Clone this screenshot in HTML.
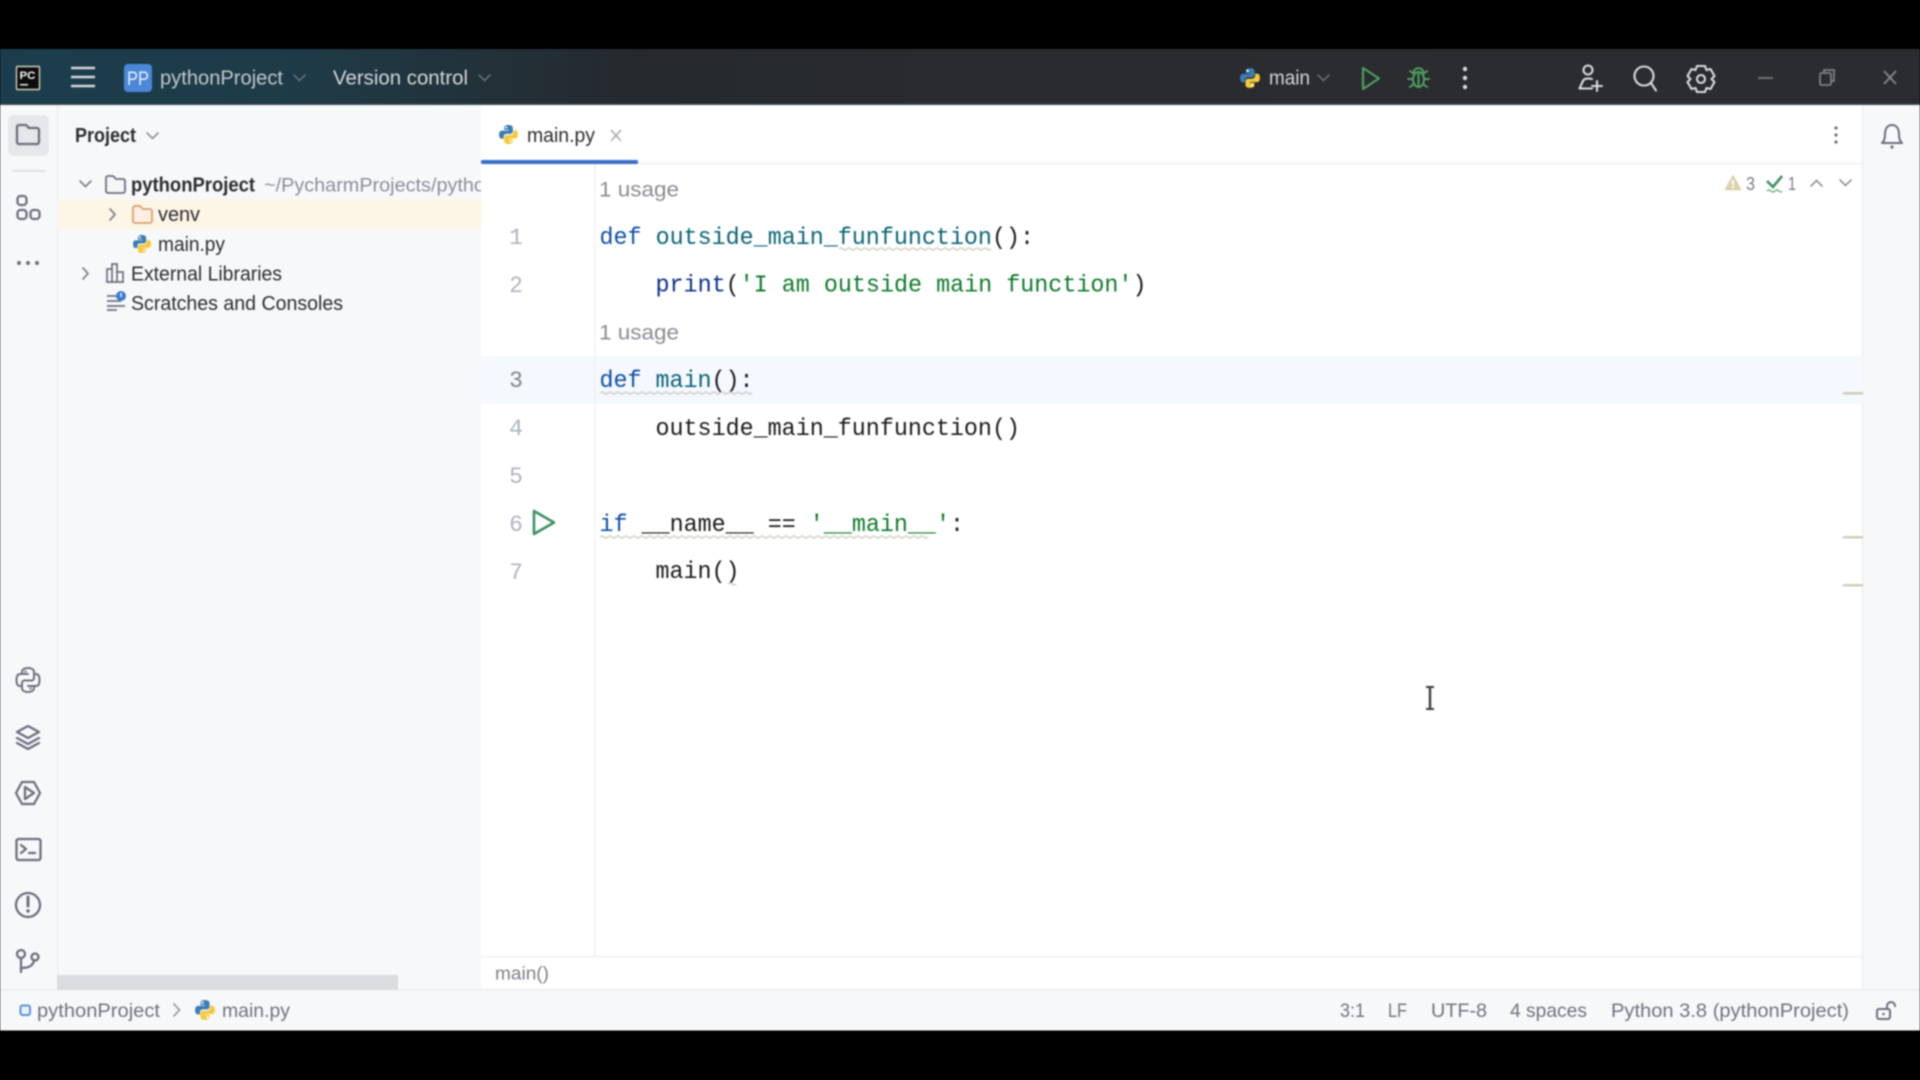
<!DOCTYPE html>
<html lang="en"><head><meta charset="utf-8"><title>pythonProject - main.py</title>
<style>
html,body{margin:0;padding:0;background:#000;width:1920px;height:1080px;overflow:hidden}
svg{display:block;filter:blur(.7px)}
text{font-family:"Liberation Sans",sans-serif;white-space:pre}
.m{font-family:"Liberation Mono",monospace;font-size:24px}
.h{font-size:20px;fill:#d4d7db}
.t{font-size:20px;fill:#2b2d30}
.b{font-size:20px;fill:#2b2d30;font-weight:bold}
.s{font-size:19.5px;fill:#70737c}
.g{fill:none;stroke:#6c707e;stroke-width:2.3;stroke-linecap:round;stroke-linejoin:round}
.w{fill:none;stroke:#d8dadf;stroke-width:2.1;stroke-linecap:round;stroke-linejoin:round}
.ln{font-family:"Liberation Mono",monospace;font-size:23px;fill:#aeb3c0;text-anchor:middle}
.wv{fill:none;stroke:#c9cfc4;stroke-width:1.5}
</style></head><body>
<svg width="1920" height="1080" viewBox="0 0 1920 1080" xmlns="http://www.w3.org/2000/svg">
<defs>
<linearGradient id="hd" x1="0" x2="1" y1="0" y2="0">
<stop offset="0" stop-color="#1b3d4c"/><stop offset=".16" stop-color="#1e3a47"/><stop offset=".33" stop-color="#25292d"/><stop offset=".55" stop-color="#2a2b2e"/><stop offset="1" stop-color="#2b2c2f"/>
</linearGradient>
<symbol id="py" viewBox="0 0 16 16">
<path fill="#3c7cb8" d="M8 .8C5.400 .8 4.800 1.800 4.800 3V4.500H8.200V5H3C1.600 5 .8 6.200 .8 8.200S1.600 11.200 3 11.200H4.300V9.600C4.300 8.400 5.300 7.500 6.500 7.500H9.500C10.500 7.500 11.300 6.700 11.300 5.700V3C11.300 1.700 10.300 .8 8 .8Z"/>
<path fill="#f6c93b" d="M8 15.200C10.600 15.200 11.200 14.200 11.200 13V11.500H7.800V11H13C14.400 11 15.200 9.800 15.200 7.800S14.400 4.800 13 4.800H11.700V6.400C11.700 7.600 10.700 8.500 9.500 8.500H6.500C5.500 8.500 4.700 9.300 4.700 10.300V13C4.700 14.300 5.700 15.200 8 15.200Z"/>
<circle cx="6.300" cy="2.700" r=".8" fill="#fff"/><circle cx="9.700" cy="13.300" r=".8" fill="#fff"/>
</symbol>
</defs>

<rect width="1920" height="1080" fill="#000"/>
<!-- Header -->
<rect x="0" y="49" width="1920" height="56" fill="url(#hd)"/>
<rect x="0" y="103.500" width="1920" height="1.500" fill="#3d4a50"/>
<rect x="16.500" y="66.500" width="23" height="23" rx="1" fill="#0c0c0c" stroke="#d8d4b8" stroke-width="1.400"/>
<text x="19.500" y="79" font-size="11" font-weight="bold" fill="#f4f4f4" textLength="16" lengthAdjust="spacingAndGlyphs">PC</text>
<rect x="20" y="84" width="8" height="1.500" fill="#eee"/>
<g stroke="#d4d6da" stroke-width="2.600"><path d="M71 68H95M71 77H95M71 86H95"/></g>
<rect x="124" y="64" width="28" height="28" rx="4" fill="#4c88d8"/>
<text x="127" y="85" font-size="19" fill="#e8f0fb" textLength="22" lengthAdjust="spacingAndGlyphs">PP</text>
<text class="h" x="160" y="84.500" style="fill:#c4c9cd" textLength="123" lengthAdjust="spacingAndGlyphs">pythonProject</text>
<path fill="none" stroke="#6d7a80" stroke-width="1.400" stroke-linecap="round" d="M294 75l5.500 5.500 5.500-5.500M479 75l5.500 5.500 5.500-5.500"/>
<text class="h" x="333" y="84.500" textLength="135" lengthAdjust="spacingAndGlyphs">Version control</text>
<use href="#py" x="1239" y="67" width="22" height="22"/>
<text class="h" x="1269" y="84.500" textLength="41" lengthAdjust="spacingAndGlyphs">main</text>
<path fill="none" stroke="#75787b" stroke-width="1.400" stroke-linecap="round" d="M1318 75l5.500 5.500 5.500-5.500"/>
<path fill="none" stroke="#4e9f5f" stroke-width="2.200" stroke-linejoin="round" d="M1363 68V89L1379 78.500Z"/>
<g fill="none" stroke="#4e9f5f" stroke-width="2" stroke-linecap="round">
<ellipse cx="1418.500" cy="79.500" rx="5.500" ry="7.500"/><path d="M1414 72c0-5 9-5 9 0"/>
<path d="M1410 71l4 3M1427 71l-4 3M1408 79h5M1429 79h-5M1410 87l4-3M1427 87l-4-3M1418.500 74v12"/>
</g>
<g fill="#d8dadf"><circle cx="1465" cy="69" r="2.200"/><circle cx="1465" cy="78" r="2.200"/><circle cx="1465" cy="87" r="2.200"/></g>
<g class="w"><circle cx="1588" cy="70" r="4.500"/><path d="M1592 79c-4-1-8-.5-9 2l-3.500 7.500H1592M1597 81V91M1592 86H1602"/></g>
<g class="w"><circle cx="1644" cy="76" r="9.500"/><path d="M1651 83l5 7.500"/></g>
<g class="w"><path d="M1697 66h8l1.500 4 4-1 4 7-3 3 3 3-4 7-4-1-1.500 4h-8l-1.500-4-4 1-4-7 3-3-3-3 4-7 4 1z"/><circle cx="1701" cy="79" r="4"/></g>
<path stroke="#6f7174" stroke-width="2" d="M1758 78H1773"/>
<g fill="none" stroke="#7d7f82" stroke-width="1.800"><rect x="1820" y="73" width="11" height="12" rx="1.500"/><path d="M1824 73v-3h10v11h-3"/></g>
<path stroke="#85878a" stroke-width="1.800" fill="none" d="M1884 71L1896 84M1896 71L1884 84"/>

<!-- Panels -->
<rect x="0" y="105" width="481" height="885" fill="#f7f8fa"/>
<rect x="57" y="105" width="1.500" height="885" fill="#eff0f3"/>
<rect x="481" y="105" width="1382" height="885" fill="#fff"/>
<rect x="1863" y="105" width="57" height="885" fill="#f7f8fa"/>
<rect x="1862" y="105" width="1.500" height="885" fill="#eceef1"/>
<rect x="0" y="990" width="1920" height="40.500" fill="#f7f8fa"/>
<rect x="0" y="989" width="1920" height="1.500" fill="#ebecf0"/>

<!-- Left stripe -->
<rect x="8" y="115" width="41" height="41" rx="6" fill="#e6e7ea"/>
<path class="g" d="M17 127a2 2 0 0 1 2-2h7l3 3h8a2 2 0 0 1 2 2v12a2 2 0 0 1-2 2H19a2 2 0 0 1-2-2z"/>
<rect x="12" y="170" width="33" height="1.800" fill="#dcdee2"/>
<g class="g"><rect x="17.500" y="196" width="9" height="9" rx="3"/><rect x="17.500" y="210" width="9" height="9" rx="3"/><rect x="30.500" y="210" width="9" height="9" rx="3"/></g>
<g fill="#6c707e"><circle cx="19" cy="263" r="2"/><circle cx="28" cy="263" r="2"/><circle cx="37" cy="263" r="2"/></g>
<g class="g" style="stroke-width:2">
<path d="M22 674v-2c0-2.500 2.500-4 6-4s6 1.500 6 4v6c0 1.500-1 2.500-2.500 2.500h-7C23 680.500 22 681.500 22 683v3h-2c-2.500 0-3.500-2.500-3.500-6s1-6 3.500-6h8"/>
<path d="M34 686v2c0 2.500-2.500 4-6 4s-6-1.500-6-4v-5M34 686h2c2.500 0 3.500-2.500 3.500-6s-1-6-3.500-6h-2M34 686h-6"/>
</g>
<circle cx="25.500" cy="671.500" r="1.100" fill="#6c707e"/><circle cx="30.500" cy="688.500" r="1.100" fill="#6c707e"/>
<g class="g"><path d="M28 726l11 6-11 6-11-6z"/><path d="M17 738l11 6 11-6M17 743l11 6 11-6"/></g>
<g class="g"><path d="M22 782h12l6 11-6 11H22l-6-11z"/><path d="M25 787l9 6-9 6z"/></g>
<g class="g"><rect x="16.500" y="839" width="24" height="21" rx="2"/><path d="M21 845l5 4-5 4M29 853h6"/></g>
<g class="g"><circle cx="28" cy="905" r="12"/></g>
<path d="M28 897v9" stroke="#6c707e" stroke-width="3" stroke-linecap="round"/><circle cx="28" cy="911" r="1.800" fill="#6c707e"/>
<g class="g"><circle cx="21" cy="954" r="4"/><circle cx="35" cy="957" r="3.500"/><path d="M21 958v14M21 968c9 0 12-3 13-7.500"/></g>

<!-- Project panel -->
<text class="b" x="75" y="142" textLength="61" lengthAdjust="spacingAndGlyphs">Project</text>
<path fill="none" stroke="#8d919c" stroke-width="1.600" stroke-linecap="round" d="M147 133l5.500 5.500 5.500-5.500"/>
<rect x="58" y="199" width="423" height="31" fill="#fdf5e6"/>
<path fill="none" stroke="#7d818c" stroke-width="1.700" stroke-linecap="round" d="M80 181l5.500 5.500 5.500-5.500"/>
<path fill="none" stroke="#7d818c" stroke-width="1.700" stroke-linecap="round" stroke-linejoin="round" d="M110 209l5 5.500-5 5.500"/>
<path fill="none" stroke="#7d818c" stroke-width="1.700" stroke-linecap="round" stroke-linejoin="round" d="M83 268l5 5.500-5 5.500"/>
<path fill="#f4f5f7" stroke="#6c707e" stroke-width="1.800" d="M106 178a2 2 0 0 1 2-2h5l3 3h7a2 2 0 0 1 2 2v10a2 2 0 0 1-2 2h-15a2 2 0 0 1-2-2z"/>
<text class="b" x="131" y="191.500" textLength="124" lengthAdjust="spacingAndGlyphs">pythonProject</text>
<clipPath id="cp"><rect x="260" y="170" width="221" height="30"/></clipPath>
<text x="264" y="191.500" font-size="19.500" fill="#8c8f98" clip-path="url(#cp)" textLength="232" lengthAdjust="spacingAndGlyphs">~/PycharmProjects/python</text>
<path fill="#fdf0e2" stroke="#d9a173" stroke-width="1.800" d="M133 208a2 2 0 0 1 2-2h5l3 3h7a2 2 0 0 1 2 2v10a2 2 0 0 1-2 2h-15a2 2 0 0 1-2-2z"/>
<text class="t" x="158" y="221" textLength="42" lengthAdjust="spacingAndGlyphs">venv</text>
<use href="#py" x="132" y="233" width="20" height="22"/>
<text class="t" x="158" y="251" textLength="67" lengthAdjust="spacingAndGlyphs">main.py</text>
<g fill="none" stroke="#6c707e" stroke-width="1.700"><path d="M107 282v-13h5v13zM112 282v-18h5v18zM117 282v-10h6v10zM106 282h18"/></g>
<text class="t" x="131" y="280.500" textLength="151" lengthAdjust="spacingAndGlyphs">External Libraries</text>
<g stroke="#6c707e" stroke-width="1.700"><path d="M107 296h11M107 301h14M107 306h18M107 310h10"/></g>
<circle cx="121" cy="296" r="5" fill="#3a7bd5"/><path d="M121 293v4" stroke="#fff" stroke-width="1.400"/>
<text class="t" x="131" y="310" textLength="212" lengthAdjust="spacingAndGlyphs">Scratches and Consoles</text>
<rect x="57" y="975" width="341" height="15" fill="#dbdcdf"/>

<!-- Tab bar -->
<rect x="481" y="163" width="1382" height="1.500" fill="#eef0f2"/>
<rect x="481" y="160" width="157" height="4" rx="1.500" fill="#3a70c9"/>
<use href="#py" x="498" y="124" width="21" height="21"/>
<text class="t" x="527" y="142" textLength="68" lengthAdjust="spacingAndGlyphs">main.py</text>
<path stroke="#a5a8af" stroke-width="1.500" d="M611 130L621 141M621 130L611 141"/>
<g fill="#6c707e"><circle cx="1836" cy="128" r="1.600"/><circle cx="1836" cy="135" r="1.600"/><circle cx="1836" cy="142" r="1.600"/></g>
<g class="g" style="stroke-width:2"><path d="M1882 143c2-2 3-4 3-9 0-6 3-9 7-9s7 3 7 9c0 5 1 7 3 9z"/></g><circle cx="1892" cy="147" r="1.600" fill="#6c707e"/>

<!-- Editor -->
<rect x="481" y="356.500" width="1382" height="47" fill="#f5f8fe"/>
<rect x="594" y="164" width="1.500" height="792" fill="#f0f1f3"/>
<rect x="481" y="956" width="1382" height="1.500" fill="#eff0f2"/>

<text class="ln" x="516" y="244">1</text>
<text class="ln" x="516" y="292">2</text>
<text class="ln" x="516" y="387" style="fill:#7f838d">3</text>
<text class="ln" x="516" y="435">4</text>
<text class="ln" x="516" y="483">5</text>
<text class="ln" x="516" y="531">6</text>
<text class="ln" x="516" y="579">7</text>

<text x="599" y="196.500" font-size="21" fill="#898c94" textLength="80" lengthAdjust="spacingAndGlyphs">1 usage</text>
<text x="599" y="339.500" font-size="21" fill="#898c94" textLength="80" lengthAdjust="spacingAndGlyphs">1 usage</text>

<text class="m" x="599.500" y="244" fill="#080808" textLength="434.500" lengthAdjust="spacingAndGlyphs"><tspan fill="#0f4fa8">def </tspan><tspan fill="#0a6478">outside_main_funfunction</tspan><tspan fill="#1a1a1a">():</tspan></text>
<text class="m" x="655.500" y="291.500" fill="#080808" textLength="491" lengthAdjust="spacingAndGlyphs"><tspan fill="#0a2f8f">print</tspan><tspan fill="#1a1a1a">(</tspan><tspan fill="#0e7a2a">'I am outside main function'</tspan><tspan fill="#1a1a1a">)</tspan></text>
<text class="m" x="599.500" y="387" textLength="154" lengthAdjust="spacingAndGlyphs"><tspan fill="#0f4fa8">def </tspan><tspan fill="#0a6478">main</tspan><tspan fill="#1a1a1a">():</tspan></text>
<text class="m" x="655.500" y="435" fill="#1a1a1a" textLength="364.500" lengthAdjust="spacingAndGlyphs">outside_main_funfunction()</text>
<text class="m" x="599.500" y="531" fill="#1a1a1a" textLength="364.500" lengthAdjust="spacingAndGlyphs"><tspan fill="#0f4fa8">if </tspan>__name__ == <tspan fill="#0e7a2a">'__main__'</tspan>:</text>
<text class="m" x="655.500" y="578" fill="#1a1a1a" textLength="84" lengthAdjust="spacingAndGlyphs">main()</text>

<path fill="none" stroke="#3f8f63" stroke-width="2.600" stroke-linejoin="round" d="M534 511V534L554 522.500Z"/>

<path class="wv" d="M839 249q2-2 4 0t4 0 4 0 4 0 4 0 4 0 4 0 4 0 4 0 4 0 4 0 4 0 4 0 4 0 4 0 4 0 4 0 4 0 4 0 4 0 4 0 4 0 4 0 4 0 4 0 4 0 4 0 4 0 4 0 4 0 4 0 4 0 4 0 4 0 4 0 4 0 4 0 4 0"/>
<path class="wv" d="M600 393q2-2 4 0t4 0 4 0 4 0 4 0 4 0 4 0 4 0 4 0 4 0 4 0 4 0 4 0 4 0 4 0 4 0 4 0 4 0 4 0 4 0 4 0 4 0 4 0 4 0 4 0 4 0 4 0 4 0 4 0 4 0 4 0 4 0 4 0 4 0 4 0 4 0 4 0 4 0"/>
<path class="wv" d="M600 537q2-2 4 0t4 0 4 0 4 0 4 0 4 0 4 0 4 0 4 0 4 0 4 0 4 0 4 0 4 0 4 0 4 0 4 0 4 0 4 0 4 0 4 0 4 0 4 0 4 0 4 0 4 0 4 0 4 0 4 0 4 0 4 0 4 0 4 0 4 0 4 0 4 0 4 0 4 0 4 0 4 0 4 0 4 0 4 0 4 0 4 0 4 0 4 0 4 0 4 0 4 0 4 0 4 0 4 0 4 0 4 0 4 0 4 0 4 0 4 0 4 0 4 0 4 0 4 0 4 0 4 0 4 0 4 0 4 0 4 0 4 0 4 0 4 0 4 0 4 0 4 0 4 0 4 0 4 0 4 0 4 0 4 0 4 0"/>
<path class="wv" d="M728 584q2-2 4 0t4 0"/>

<!-- Inspection widget -->
<path fill="#d9d2ab" stroke="#d9d2ab" stroke-width="1.500" stroke-linejoin="round" d="M1733 176l7.500 13.500h-15Z"/><rect x="1732" y="180" width="2" height="5" fill="#fff"/><rect x="1732" y="186" width="2" height="2" fill="#fff"/>
<text x="1746" y="190" font-size="18" fill="#797c85" textLength="9" lengthAdjust="spacingAndGlyphs">3</text>
<path fill="none" stroke="#3e8f5e" stroke-width="2.600" d="M1767 181l6 6 9-11"/>
<path fill="none" stroke="#6cae80" stroke-width="1.300" d="M1767 191q2-2 4 0t4 0 4 0 3 0"/>
<text x="1788" y="190" font-size="18" fill="#797c85" textLength="8" lengthAdjust="spacingAndGlyphs">1</text>
<path fill="none" stroke="#8f929a" stroke-width="1.600" stroke-linecap="round" d="M1811 186l5.500-5.500 5.500 5.500M1840 180l5.500 5.500 5.500-5.500"/>
<rect x="1843" y="392" width="20" height="2.500" fill="#cfcfb5"/>
<rect x="1843" y="536" width="20" height="2.500" fill="#cfcfb5"/>
<rect x="1843" y="584" width="20" height="2.500" fill="#cfcfb5"/>

<!-- I-beam -->
<g stroke="#3c3c3c" fill="none"><path stroke-width="2.400" d="M1430 687V709"/><path stroke-width="2" d="M1426 687h8M1426 709h8"/></g>

<!-- Breadcrumb -->
<text x="495" y="979.500" font-size="18.500" fill="#7c7f88" textLength="54" lengthAdjust="spacingAndGlyphs">main()</text>

<!-- Status bar -->
<rect x="20.500" y="1005.500" width="9.500" height="9.500" rx="2" fill="#eaf1fb" stroke="#5a92da" stroke-width="2"/>
<text class="s" x="37" y="1017" textLength="123" lengthAdjust="spacingAndGlyphs">pythonProject</text>
<path fill="none" stroke="#8d919c" stroke-width="1.600" stroke-linecap="round" stroke-linejoin="round" d="M174 1004l5.500 6-5.500 6"/>
<use href="#py" x="194" y="999" width="22" height="22"/>
<text class="s" x="222" y="1017" textLength="68" lengthAdjust="spacingAndGlyphs">main.py</text>
<text class="s" x="1340" y="1017" textLength="25" lengthAdjust="spacingAndGlyphs">3:1</text>
<text class="s" x="1388" y="1017" textLength="19" lengthAdjust="spacingAndGlyphs">LF</text>
<text class="s" x="1431" y="1017" textLength="56" lengthAdjust="spacingAndGlyphs">UTF-8</text>
<text class="s" x="1510" y="1017" textLength="77" lengthAdjust="spacingAndGlyphs">4 spaces</text>
<text class="s" x="1611" y="1017" textLength="238" lengthAdjust="spacingAndGlyphs">Python 3.8 (pythonProject)</text>
<g fill="none" stroke="#6c707e" stroke-width="2"><rect x="1877" y="1009" width="13" height="10" rx="2"/><path d="M1887 1009v-3a4 4 0 0 1 8 0v1"/></g>
<circle cx="1883.500" cy="1014" r="1.300" fill="#6c707e"/>
</svg>
</body></html>
